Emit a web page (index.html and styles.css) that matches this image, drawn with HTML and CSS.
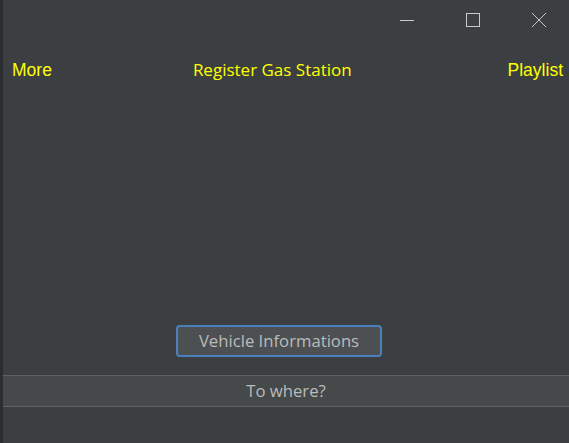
FILE: index.html
```html
<!DOCTYPE html>
<html>
<head>
<meta charset="utf-8">
<link rel="stylesheet" href="styles.css">
</head>
<body>
<div class="app">
  <div class="strip"></div>
  <div class="main">
    <div class="titlebar">
      <div class="wbtn"><svg width="16" height="16" viewBox="0 0 16 16"><line x1="1" y1="8.5" x2="15" y2="8.5" stroke="#c8c8c8" stroke-width="1"/></svg></div>
      <div class="wbtn"><svg width="16" height="16" viewBox="0 0 16 16"><rect x="1.5" y="1.5" width="13" height="13" fill="none" stroke="#c8c8c8" stroke-width="1"/></svg></div>
      <div class="wbtn"><svg width="16" height="16" viewBox="0 0 16 16"><path d="M1 1 L15 15 M15 1 L1 15" stroke="#c8c8c8" stroke-width="1"/></svg></div>
    </div>
    <div class="header">
      <span class="link">More</span>
      <span class="title">Register Gas Station</span>
      <span class="link right">Playlist</span>
    </div>
    <div class="spacer"></div>
    <div class="btnrow">
      <button class="vbtn">Vehicle Informations</button>
    </div>
    <div class="bar">To where?</div>
    <div class="bottom"></div>
  </div>
</div>
</body>
</html>
```
FILE: styles.css
```css
html, body {
  margin: 0;
  padding: 0;
  background: #3c3f41;
  width: 569px;
  height: 443px;
  overflow: hidden;
}
.app {
  display: flex;
  height: 443px;
}
.strip {
  width: 3px;
  background: #2b2d2f;
  flex: none;
}
.main {
  flex: 1;
  display: flex;
  flex-direction: column;
  background: #3c3f41;
}
.titlebar {
  height: 40px;
  display: flex;
  justify-content: flex-end;
  align-items: center;
  padding-right: 22px;
  gap: 50px;
}
.wbtn {
  width: 16px;
  height: 16px;
  display: flex;
  padding-bottom: 1px;
}
.header {
  display: flex;
  align-items: baseline;
  padding-left: 9px;
  height: 30px;
  margin-top: 20px;
  line-height: 20px;
}
.link {
  font-family: "Liberation Sans", Arial, sans-serif;
  font-size: 17.5px;
  color: #ffff00;
}
.right {
  margin-left: auto;
  margin-right: 6px;
}
.title {
  font-family: "Open Sans", sans-serif;
  font-size: 17px;
  color: #ffff00;
  margin-left: 141px;
}
.spacer {
  flex: 1;
}
.btnrow {
  display: flex;
  padding-left: 173px;
}
.vbtn {
  width: 206px;
  height: 32px;
  box-sizing: border-box;
  background: #4c5052;
  border: 2px solid #4a80bb;
  border-radius: 4px;
  color: #bbbbbb;
  font-family: "Open Sans", sans-serif;
  font-size: 16.7px;
  padding: 0;
  line-height: 26px;
}
.bar {
  margin-top: 18px;
  height: 30px;
  border-top: 1px solid #5e6162;
  border-bottom: 1px solid #5e6162;
  background: #45494a;
  color: #bbbbbb;
  font-family: "Open Sans", sans-serif;
  font-size: 16.7px;
  text-align: center;
  line-height: 30px;
}
.bottom {
  height: 36px;
}
```
